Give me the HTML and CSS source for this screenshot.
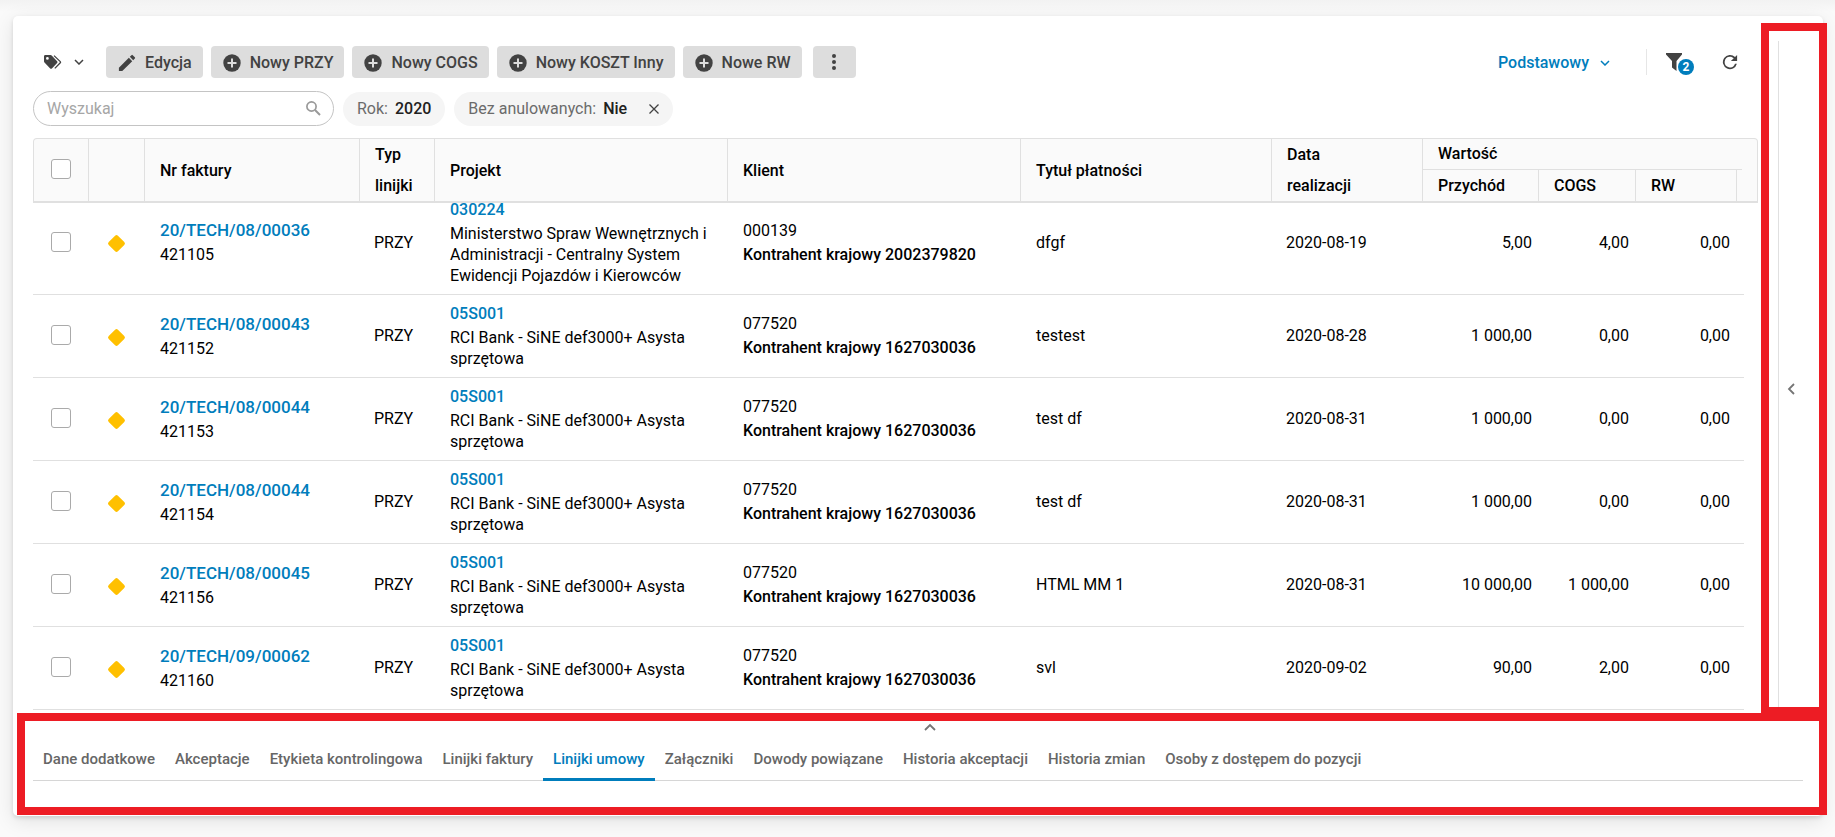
FILE: index.html
```html
<!DOCTYPE html>
<html lang="pl">
<head>
    <meta charset="UTF-8">
    <meta name="viewport" content="width=device-width, initial-scale=1.0">
    <title>Linijki umowy</title>
    <link rel="stylesheet" href="styles.css">
</head>
<body>
    <svg width="0" height="0" class="sprite">
        <symbol id="plus" viewBox="0 0 18 18">
            <circle cx="9" cy="9" r="8.700" fill="currentColor"/>
            <path d="M9 4.500v9M4.500 9h9" stroke="#ddd" stroke-width="2"/>
        </symbol>
        <symbol id="down" viewBox="0 0 10 6">
            <path d="M1 1l4 4 4-4" fill="none" stroke="currentColor" stroke-width="1.500"/>
        </symbol>
    </svg>
    <div class="card">
        <div class="top">
            <main class="main">
                <div class="toolbar">
                    <button class="plain tags" aria-label="Etykiety">
                        <svg width="18" height="14" viewBox="0 0 18 14">
                            <path fill="currentColor" fill-rule="evenodd" d="M1.300 0h5.200c.5 0 .9.2 1.200.5l5.400 5.800c.5.5.5 1.200 0 1.700l-5.200 5.400c-.5.5-1.200.5-1.700 0L.5 7.400C.2 7 0 6.700 0 6.200V1.300C0 .6.6 0 1.300 0zM3.400 2a1.400 1.400 0 1 0 0 2.800 1.400 1.400 0 0 0 0-2.800z"/>
                            <path d="M10 .6l6.300 6c.4.4.4.7 0 1.100l-5.500 5.700" fill="none" stroke="currentColor" stroke-width="1.300"/>
                        </svg>
                        <svg width="10" height="6"><use href="#down"/></svg>
                    </button>
                    <button class="btn">
                        <svg width="18" height="18" viewBox="2 2 20 20"><path fill="currentColor" d="M3 17.250V21h3.750L17.810 9.940l-3.750-3.750L3 17.250zM20.710 7.040a1 1 0 0 0 0-1.410l-2.340-2.340a1 1 0 0 0-1.410 0l-1.830 1.830 3.750 3.750 1.830-1.830z"/></svg>
                        Edycja
                    </button>
                    <button class="btn"><svg width="18" height="18"><use href="#plus"/></svg>Nowy PRZY</button>
                    <button class="btn"><svg width="18" height="18"><use href="#plus"/></svg>Nowy COGS</button>
                    <button class="btn"><svg width="18" height="18"><use href="#plus"/></svg>Nowy KOSZT Inny</button>
                    <button class="btn"><svg width="18" height="18"><use href="#plus"/></svg>Nowe RW</button>
                    <button class="btn more" aria-label="Więcej">
                        <svg width="4" height="16" viewBox="0 0 4 16" fill="currentColor"><circle cx="2" cy="2" r="2"/><circle cx="2" cy="8" r="2"/><circle cx="2" cy="14" r="2"/></svg>
                    </button>
                    <div class="toolbar-right">
                        <button class="plain view">Podstawowy <svg width="10" height="6"><use href="#down"/></svg></button>
                        <button class="plain filter" aria-label="Filtry">
                            <svg width="16" height="18" viewBox="0 0 16 18"><path fill="currentColor" d="M0 0h16v1.500L10.500 8v10L6 14.500V8L0 1.500z"/></svg>
                            <span class="badge">2</span>
                        </button>
                        <button class="plain" aria-label="Odśwież">
                            <svg width="16" height="16" viewBox="3 3 18 18"><path fill="currentColor" d="M17.650 6.350A8 8 0 1 0 19.730 14h-2.080A6 6 0 1 1 12 6c1.660 0 3.140.69 4.220 1.780L13 11h7V4l-2.350 2.350z"/></svg>
                        </button>
                    </div>
                </div>

                <div class="filters">
                    <div class="search">
                        <input type="text" placeholder="Wyszukaj" aria-label="Wyszukaj">
                        <svg width="15" height="15" viewBox="0 0 15 15" fill="none" stroke="currentColor"><circle cx="5.500" cy="5.500" r="4.600" stroke-width="1.700"/><path d="M9 9l5 5" stroke-width="2"/></svg>
                    </div>
                    <div class="chip">Rok: <b>2020</b></div>
                    <div class="chip">Bez anulowanych: <b>Nie</b>
                        <button class="plain close" aria-label="Usuń filtr"><svg width="10" height="10" viewBox="0 0 10 10"><path d="M.5.5l9 9M9.500.5l-9 9" stroke="currentColor" stroke-width="1.300"/></svg></button>
                    </div>
                </div>

                <div class="grid-head">
                    <table>
                        <colgroup>
                            <col class="c-check"><col class="c-status"><col class="c-nr"><col class="c-type"><col><col>
                            <col class="c-title"><col class="c-date"><col class="c-income"><col class="c-cogs"><col class="c-rw"><col class="c-end">
                        </colgroup>
                        <thead>
                            <tr>
                                <th rowspan="2" class="check"><input type="checkbox" aria-label="Zaznacz wszystko"></th>
                                <th rowspan="2"></th>
                                <th rowspan="2">Nr faktury</th>
                                <th rowspan="2">Typ linijki</th>
                                <th rowspan="2">Projekt</th>
                                <th rowspan="2">Klient</th>
                                <th rowspan="2">Tytuł płatności</th>
                                <th rowspan="2">Data<br>realizacji</th>
                                <th colspan="4" class="group">Wartość</th>
                            </tr>
                            <tr>
                                <th>Przychód</th>
                                <th>COGS</th>
                                <th>RW</th>
                                <th class="end"></th>
                            </tr>
                        </thead>
                    </table>
                </div>
                <div class="grid-body">
                    <table>
                        <colgroup>
                            <col class="c-check"><col class="c-status"><col class="c-nr"><col class="c-type"><col><col>
                            <col class="c-title"><col class="c-date"><col class="c-income"><col class="c-cogs"><col class="c-rw"><col class="c-end">
                        </colgroup>
                        <tbody>
                            <tr>
                                <td class="check"><input type="checkbox" aria-label="Zaznacz 421105"></td>
                                <td class="status"><span class="diamond"></span></td>
                                <td><a href="#" class="nr">20/TECH/08/00036</a><div>421105</div></td>
                                <td class="type">PRZY</td>
                                <td class="project"><a href="#">030224</a>Ministerstwo Spraw Wewnętrznych i Administracji - Centralny System Ewidencji Pojazdów i Kierowców</td>
                                <td>000139<div class="client">Kontrahent krajowy 2002379820</div></td>
                                <td>dfgf</td>
                                <td class="type">2020-08-19</td>
                                <td class="num">5,00</td>
                                <td class="num">4,00</td>
                                <td class="num">0,00</td>
                                <td></td>
                            </tr>
                            <tr>
                                <td class="check"><input type="checkbox" aria-label="Zaznacz 421152"></td>
                                <td class="status"><span class="diamond"></span></td>
                                <td><a href="#" class="nr">20/TECH/08/00043</a><div>421152</div></td>
                                <td class="type">PRZY</td>
                                <td class="project"><a href="#">05S001</a>RCI Bank - SiNE def3000+ Asysta sprzętowa</td>
                                <td>077520<div class="client">Kontrahent krajowy 1627030036</div></td>
                                <td>testest</td>
                                <td class="type">2020-08-28</td>
                                <td class="num">1 000,00</td>
                                <td class="num">0,00</td>
                                <td class="num">0,00</td>
                                <td></td>
                            </tr>
                            <tr>
                                <td class="check"><input type="checkbox" aria-label="Zaznacz 421153"></td>
                                <td class="status"><span class="diamond"></span></td>
                                <td><a href="#" class="nr">20/TECH/08/00044</a><div>421153</div></td>
                                <td class="type">PRZY</td>
                                <td class="project"><a href="#">05S001</a>RCI Bank - SiNE def3000+ Asysta sprzętowa</td>
                                <td>077520<div class="client">Kontrahent krajowy 1627030036</div></td>
                                <td>test df</td>
                                <td class="type">2020-08-31</td>
                                <td class="num">1 000,00</td>
                                <td class="num">0,00</td>
                                <td class="num">0,00</td>
                                <td></td>
                            </tr>
                            <tr>
                                <td class="check"><input type="checkbox" aria-label="Zaznacz 421154"></td>
                                <td class="status"><span class="diamond"></span></td>
                                <td><a href="#" class="nr">20/TECH/08/00044</a><div>421154</div></td>
                                <td class="type">PRZY</td>
                                <td class="project"><a href="#">05S001</a>RCI Bank - SiNE def3000+ Asysta sprzętowa</td>
                                <td>077520<div class="client">Kontrahent krajowy 1627030036</div></td>
                                <td>test df</td>
                                <td class="type">2020-08-31</td>
                                <td class="num">1 000,00</td>
                                <td class="num">0,00</td>
                                <td class="num">0,00</td>
                                <td></td>
                            </tr>
                            <tr>
                                <td class="check"><input type="checkbox" aria-label="Zaznacz 421156"></td>
                                <td class="status"><span class="diamond"></span></td>
                                <td><a href="#" class="nr">20/TECH/08/00045</a><div>421156</div></td>
                                <td class="type">PRZY</td>
                                <td class="project"><a href="#">05S001</a>RCI Bank - SiNE def3000+ Asysta sprzętowa</td>
                                <td>077520<div class="client">Kontrahent krajowy 1627030036</div></td>
                                <td>HTML MM 1</td>
                                <td class="type">2020-08-31</td>
                                <td class="num">10 000,00</td>
                                <td class="num">1 000,00</td>
                                <td class="num">0,00</td>
                                <td></td>
                            </tr>
                            <tr>
                                <td class="check"><input type="checkbox" aria-label="Zaznacz 421160"></td>
                                <td class="status"><span class="diamond"></span></td>
                                <td><a href="#" class="nr">20/TECH/09/00062</a><div>421160</div></td>
                                <td class="type">PRZY</td>
                                <td class="project"><a href="#">05S001</a>RCI Bank - SiNE def3000+ Asysta sprzętowa</td>
                                <td>077520<div class="client">Kontrahent krajowy 1627030036</div></td>
                                <td>svl</td>
                                <td class="type">2020-09-02</td>
                                <td class="num">90,00</td>
                                <td class="num">2,00</td>
                                <td class="num">0,00</td>
                                <td></td>
                            </tr>
                        </tbody>
                    </table>
                </div>
            </main>
            <aside class="side">
                <button class="plain" aria-label="Rozwiń panel boczny">
                    <svg width="8" height="12" viewBox="0 0 8 12"><path d="M7 1L2 6l5 5" fill="none" stroke="currentColor" stroke-width="1.800"/></svg>
                </button>
            </aside>
        </div>

        <section class="details">
            <button class="plain expand" aria-label="Rozwiń szczegóły">
                <svg width="12" height="8" viewBox="0 0 12 8"><path d="M1 7l5-5 5 5" fill="none" stroke="currentColor" stroke-width="1.800"/></svg>
            </button>
            <nav class="tabs">
                <a href="#">Dane dodatkowe</a>
                <a href="#">Akceptacje</a>
                <a href="#">Etykieta kontrolingowa</a>
                <a href="#">Linijki faktury</a>
                <a href="#" class="active">Linijki umowy</a>
                <a href="#">Załączniki</a>
                <a href="#">Dowody powiązane</a>
                <a href="#">Historia akceptacji</a>
                <a href="#">Historia zmian</a>
                <a href="#">Osoby z dostępem do pozycji</a>
            </nav>
        </section>

        <!-- ramki wyróżniające panele -->
        <div class="mark mark-side"></div>
        <div class="mark mark-details"></div>
    </div>
</body>
</html>
```

FILE: styles.css
```css
* {
    box-sizing: border-box;
}
body {
    margin: 0;
    height: 100vh;
    padding: 16px 12px 21px 13px;
    background: linear-gradient(#f2f2f2, #fafafa 12px);
    font-family: Roboto, sans-serif;
    font-size: 16px;
    line-height: 24px;
    color: #000;
    overflow: hidden;
}
.sprite {
    position: absolute;
}
svg {
    display: block;
    flex: none;
}
a {
    color: #007dbc;
    text-decoration: none;
}
b {
    font-weight: 500;
}
.card {
    position: relative;
    display: flex;
    flex-direction: column;
    height: 100%;
    background: #fff;
    border-radius: 5px;
    box-shadow: 0 2px 4px rgba(0,0,0,0.12), 0 5px 20px rgba(0,0,0,0.1);
}
.top {
    display: flex;
    flex: 1;
    min-height: 0;
    gap: 20px;
}
.main {
    display: flex;
    flex-direction: column;
    flex: 1;
    min-width: 0;
    padding: 30px 0 0 20px;
}

/* toolbar */
button {
    font: inherit;
    cursor: pointer;
}
.plain {
    display: flex;
    align-items: center;
    justify-content: center;
    padding: 0;
    border: none;
    background: none;
    color: #424242;
}
.toolbar {
    display: flex;
    align-items: center;
    gap: 8px;
    height: 32px;
}
.tags {
    gap: 12px;
    margin: 0 14px 0 11px;
}
.btn {
    display: flex;
    align-items: center;
    gap: 9px;
    height: 32px;
    padding: 2px 11px 0 12px;
    border: none;
    border-radius: 4px;
    background: #ddd;
    color: #424242;
    font-weight: 500;
}
.more {
    width: 43px;
    margin-left: 3px;
    padding: 0;
    justify-content: center;
}
.toolbar-right {
    display: flex;
    align-items: center;
    margin-left: auto;
    padding-right: 20px;
}
.view {
    gap: 11px;
    padding-top: 2px;
    color: #007dbc;
    font-weight: 500;
}
.filter {
    position: relative;
    height: 26px;
    margin-left: 36px;
    margin-right: 40px;
    padding-left: 19px;
    border-left: 1px solid #e6e6e6;
}
.badge {
    position: absolute;
    left: 31px;
    top: 10px;
    width: 16px;
    height: 16px;
    border-radius: 50%;
    background: #007dbc;
    color: #fff;
    font-size: 12px;
    font-weight: 700;
    line-height: 16px;
    text-align: center;
}

/* filters */
.filters {
    display: flex;
    align-items: center;
    gap: 9px;
    margin: 13px 0 12px;
}
.search {
    display: flex;
    align-items: center;
    width: 301px;
    height: 35px;
    padding: 0 12px 0 13px;
    border: 1px solid #c4c4c4;
    border-radius: 18px;
    color: #999;
}
.search input {
    flex: 1;
    min-width: 0;
    padding: 0;
    border: none;
    outline: none;
    background: none;
    font: inherit;
}
.search input::placeholder {
    color: #a6a6a6;
}
.chip {
    display: flex;
    align-items: center;
    gap: 7px;
    height: 34px;
    padding: 0 14px;
    border-radius: 17px;
    background: #f5f5f5;
    color: #6b6b6b;
}
.chip b {
    color: #212121;
}
.close {
    margin-left: 15px;
}

/* grid */
table {
    width: 100%;
    table-layout: fixed;
    border-collapse: separate;
    border-spacing: 0;
}
.c-check { width: 55px; }
.c-status { width: 56px; }
.c-nr { width: 215px; }
.c-type { width: 75px; }
.c-title { width: 251px; }
.c-date { width: 151px; }
.c-income { width: 116px; }
.c-cogs { width: 97px; }
.c-rw { width: 101px; }
.c-end { width: 5px; }
.grid-head {
    padding-right: 15px;
    border: 1px solid #e0e0e0;
    border-bottom-width: 2px;
    border-radius: 4px 4px 0 0;
    background: #fafafa;
}
th {
    height: 31px;
    padding: 0 15px;
    border-right: 1px solid #e0e0e0;
    font-weight: 500;
    line-height: 31px;
    text-align: left;
}
th.group {
    border-right: none;
    border-bottom: 1px solid #e0e0e0;
    line-height: 30px;
}
th.end {
    padding: 0;
    border-right: none;
}
.grid-body {
    flex: 1;
    min-height: 0;
    padding-right: 14px;
    overflow: hidden;
}
/* list scrolled a little below its top */
.grid-body table {
    margin-top: -12px;
}
.grid-body .c-check { width: 56px; }
.grid-body .c-end { width: 7px; }
td {
    padding: 8px 15px;
    border-bottom: 1px solid #e0e0e0;
}
td:last-child {
    padding: 0;
}
.check {
    padding: 0 0 2px;
    text-align: center;
}
.check input {
    appearance: none;
    display: block;
    width: 20px;
    height: 20px;
    margin: 0 auto;
    border: 1px solid #aaa;
    border-radius: 3px;
    background: #fff;
}
.status {
    padding: 2px 2px 0 0;
}
.diamond {
    display: block;
    width: 13px;
    height: 13px;
    margin: 0 auto;
    border-radius: 2px;
    background: #ffc000;
    transform: rotate(45deg);
}
.nr, .client, .project a {
    font-weight: 500;
}
.nr {
    font-size: 17px;
}
td.type {
    padding-left: 14px;
    padding-right: 8px;
}
.project {
    line-height: 21px;
}
.project a {
    display: block;
    margin-bottom: 3px;
}
.num {
    padding: 8px 7px;
    text-align: right;
}

/* side panel */
.side {
    display: flex;
    width: 45px;
    margin-top: 25px;
    padding: 25px 0 0 8px;
    border-left: 1px solid #e0e0e0;
}
.side .plain, .expand {
    color: #757575;
}

/* bottom panel */
.details {
    padding: 7px 20px 35px;
}
.expand {
    width: 100%;
    height: 16px;
    padding-left: 24px;
}
.tabs {
    display: flex;
    margin-top: 4px;
    border-bottom: 1px solid #d6d6d6;
}
.tabs a {
    height: 42px;
    margin-bottom: -1px;
    padding: 0 10px;
    border-bottom: 3px solid transparent;
    color: #666;
    font-size: 15px;
    font-weight: 500;
    line-height: 40px;
}
.tabs .active {
    border-color: #007dbc;
    color: #007dbc;
}

.mark {
    position: absolute;
    right: -4px;
    border: 8px solid #ed1c24;
    pointer-events: none;
}
.mark-side {
    top: 7px;
    bottom: 101px;
    width: 66px;
}
.mark-details {
    left: 4px;
    bottom: 1px;
    height: 102px;
}
```
